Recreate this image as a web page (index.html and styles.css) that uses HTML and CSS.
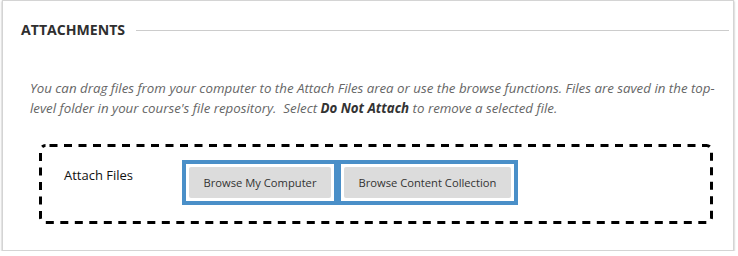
FILE: index.html
```html
<!DOCTYPE html>
<html lang="en">
<head>
    <meta charset="UTF-8">
    <meta name="viewport" content="width=device-width, initial-scale=1.0">
    <title>Attachments</title>
    <link rel="stylesheet" href="styles.css">
</head>
<body>

<div class="panel">
    <div class="panel-head">
        <h2>Attachments</h2>
        <div class="rule"></div>
    </div>

    <p class="help">You can drag files from your computer to the Attach Files area or use the browse functions. Files are saved in the top-level folder in your course's file repository.&nbsp; Select <b>Do Not Attach</b> to remove a selected file.</p>

    <!-- drop area, the dashed outline is drawn by the svg -->
    <div class="drop-area">
        <svg class="drop-outline" width="100%" height="100%" preserveAspectRatio="none">
            <rect x="1.5" y="1.5" width="671" height="77" rx="5" ry="5" fill="none" stroke="#000" stroke-width="3" stroke-dasharray="8 6.5" stroke-dashoffset="-4"/>
        </svg>
        <div class="field-label">Attach Files</div>
        <div class="browse-buttons">
            <span class="focus-ring"><button type="button" class="browse-button">Browse My Computer</button></span>
            <span class="focus-ring"><button type="button" class="browse-button">Browse Content Collection</button></span>
        </div>
    </div>
</div>

</body>
</html>
```

FILE: styles.css
```css
body {
    font-family: "Open Sans", Arial, sans-serif;
    margin: 0;
    padding: 0 2px 0 2px;
    background: #ffffff;
}
.panel {
    width: 732px;
    height: 251px;
    box-sizing: border-box;
    background: white;
    border: 1px solid #d4d4d4;
    box-shadow: 0 1px 2px rgba(0, 0, 0, 0.35);
    padding: 19px 4px 0 18px;
}
.panel-head {
    display: flex;
    align-items: center;
    height: 20px;
}
.panel-head h2 {
    margin: 0;
    font-size: 14.1px;
    line-height: 20px;
    font-weight: bold;
    text-transform: uppercase;
    color: #2f2f2f;
}
.rule {
    flex: 1;
    height: 1px;
    background: #cccccc;
    margin-left: 11px;
}
.help {
    margin: 38px 0 0 9px;
    padding-right: 2px;
    font-size: 13.3px;
    line-height: 20px;
    font-style: italic;
    color: #666666;
}
.help b {
    color: #333333;
}
.drop-area {
    position: relative;
    display: flex;
    align-items: flex-start;
    height: 80px;
    box-sizing: border-box;
    margin: 26px 19px 0 18px;
    padding: 16px 0 0 25px;
}
.drop-outline {
    position: absolute;
    left: 0;
    top: 0;
    width: 674px;
    height: 80px;
}
.field-label {
    width: 118px;
    padding-top: 5px;
    font-size: 13px;
    line-height: 20px;
    color: #111111;
}
.browse-buttons {
    display: flex;
}
.focus-ring {
    display: inline-block;
    border: 4px solid #4a8fc8;
    padding: 3px;
    background: white;
}
.focus-ring + .focus-ring {
    margin-left: -1px;
}
.browse-button {
    display: block;
    font-family: "Open Sans", Arial, sans-serif;
    font-size: 11.2px;
    line-height: 17px;
    padding: 7px 14.5px;
    background: #dcdcdc;
    color: #333333;
    border: none;
    border-radius: 2px;
    cursor: pointer;
}
```
